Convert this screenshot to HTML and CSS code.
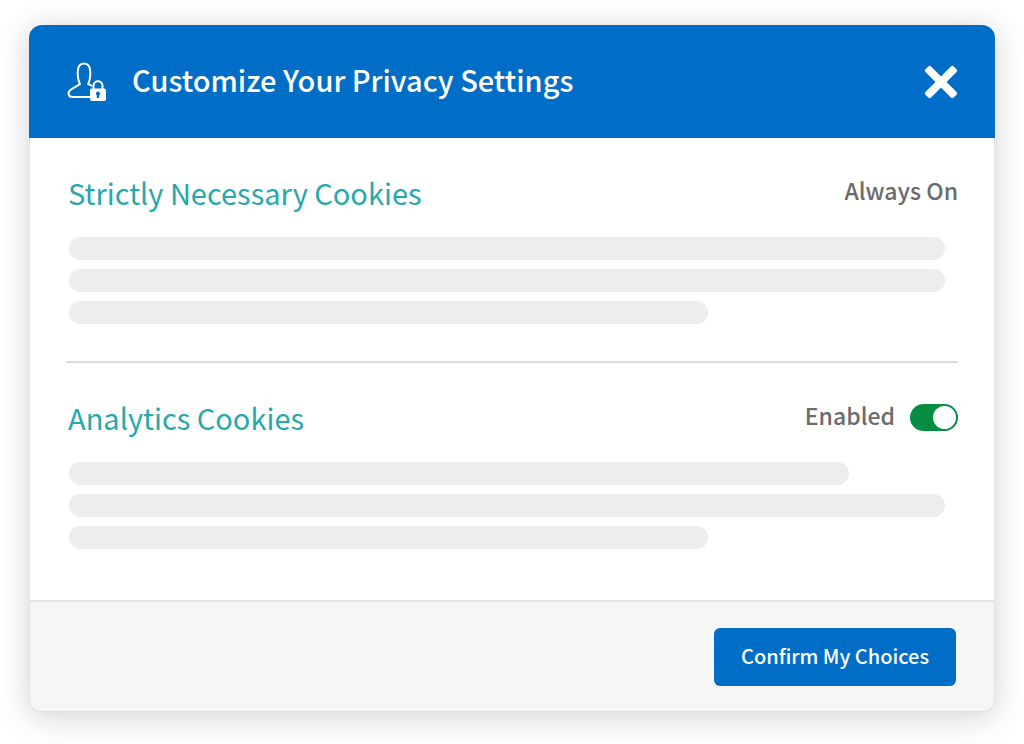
FILE: index.html
```html
<!DOCTYPE html>
<html lang="en">
<head>
    <meta charset="UTF-8">
    <meta name="viewport" content="width=device-width, initial-scale=1.0">
    <title>Privacy Settings</title>
    <link rel="stylesheet" href="styles.css">
</head>
<body>
    <main class="modal">
        <header class="modalHeader">
            <svg class="userIcon" viewBox="0 0 40 40" aria-hidden="true">
                <path d="M23 35H5.500C.8 35 .5 30 3.500 28C6 26.200 9.500 24.500 13 22C11.300 19 10.700 15 10.700 10.500C10.700 4.500 12.800 1.500 17 1.500C21.200 1.500 23.300 4.500 23.300 10.500C23.300 15 22.800 19 21.200 22C22.500 22.800 24 23.300 25.500 24" fill="none" stroke="#fff" stroke-width="2" stroke-linejoin="round"/>
                <path d="M26.500 27V24C26.500 17.800 35.500 17.800 35.500 24V27" fill="none" stroke="#fff" stroke-width="2"/>
                <rect x="23" y="26.500" width="16" height="12.500" rx="2" fill="#fff"/>
                <path d="M31 29.500a2.200 2.200 0 0 1 1.200 4V36h-2.400v-2.500A2.200 2.200 0 0 1 31 29.500z" fill="#006dc7"/>
            </svg>
            <h1 class="modalTitle">Customize Your Privacy Settings</h1>
            <button class="closeButton" type="button" aria-label="Close">
                <svg viewBox="0 0 34 34" aria-hidden="true">
                    <g fill="#fff">
                        <rect x="-3" y="13" width="40" height="8" rx="2" transform="rotate(45 17 17)"/>
                        <rect x="-3" y="13" width="40" height="8" rx="2" transform="rotate(-45 17 17)"/>
                    </g>
                </svg>
            </button>
        </header>

        <div class="modalBody">
            <section class="cookieGroup">
                <div class="groupTop">
                    <h2 class="groupTitle">Strictly Necessary Cookies</h2>
                    <p class="groupStatus">Always On</p>
                </div>
                <div class="textLines">
                    <span class="line"></span>
                    <span class="line"></span>
                    <span class="line short"></span>
                </div>
            </section>

            <section class="cookieGroup">
                <div class="groupTop">
                    <h2 class="groupTitle">Analytics Cookies</h2>
                    <label class="groupStatus" for="analytics">Enabled</label>
                    <input class="toggle" id="analytics" type="checkbox" role="switch" checked>
                </div>
                <div class="textLines">
                    <span class="line medium"></span>
                    <span class="line"></span>
                    <span class="line short"></span>
                </div>
            </section>
        </div>

        <footer class="modalFooter">
            <button class="confirmButton" type="button">Confirm My Choices</button>
        </footer>
    </main>
</body>
</html>
```
FILE: styles.css
```css
* {
    box-sizing: border-box;
}

body {
    margin: 0;
    padding: 25px 29px 31px;
    background-color: #fff;
    font-family: "Noto Sans CJK SC", "Noto Sans", sans-serif;
}

h1, h2, p {
    margin: 0;
}

.modal {
    border-radius: 13px;
    box-shadow: 0 4px 32px rgba(0, 0, 0, 0.18);
}

.modalHeader {
    display: flex;
    align-items: center;
    padding: 0 37px 0 38px;
    height: 113px;
    background-color: #006dc7;
    border-radius: 13px 13px 0 0;
}

.userIcon {
    width: 40px;
    height: 40px;
    flex: none;
}

.modalTitle {
    flex: 1;
    margin-left: 25px;
    padding-bottom: 6px;
    color: #fff;
    font-size: 29px;
    font-weight: 500;
    line-height: 40px;
}

.closeButton {
    width: 34px;
    height: 34px;
    padding: 0;
    border: 0;
    background: none;
    cursor: pointer;
}

.closeButton svg {
    display: block;
}

.modalBody {
    padding: 0 36px;
    background-color: #fff;
    border: solid #e4e4e4;
    border-width: 0 1px;
}

.cookieGroup {
    padding: 34px 0 37px;
}

.cookieGroup + .cookieGroup {
    border-top: 2px solid #dcdcdc;
    padding-bottom: 51px;
}

.groupTop {
    display: flex;
    align-items: center;
    margin-bottom: 25px;
}

.groupTitle {
    flex: 1;
    padding-left: 2px;
    color: #27a8ab;
    font-size: 29px;
    font-weight: 400;
    line-height: 40px;
}

.groupStatus {
    padding-bottom: 4px;
    color: #6b6b6b;
    font-size: 23px;
    font-weight: 500;
    line-height: 36px;
}

.toggle {
    appearance: none;
    display: flex;
    align-items: center;
    justify-content: flex-end;
    width: 48px;
    height: 27px;
    margin: 0 0 0 15px;
    padding: 0 2px;
    border-radius: 14px;
    background-color: #078d41;
    cursor: pointer;
}

.toggle:not(:checked) {
    justify-content: flex-start;
    background-color: #999;
}

.toggle::before {
    content: "";
    width: 23px;
    height: 23px;
    border-radius: 50%;
    background-color: #fff;
}

.textLines {
    display: flex;
    flex-direction: column;
    gap: 9px;
    padding: 0 13px 0 3px;
}

.line {
    height: 23px;
    border-radius: 12px;
    background-color: #ededed;
}

.line.medium {
    width: 89%;
}

.line.short {
    width: 73%;
}

.modalFooter {
    display: flex;
    justify-content: flex-end;
    padding: 26px 38px 25px;
    background-color: #f6f6f6;
    border: solid #e4e4e4;
    border-width: 2px 1px;
    border-radius: 0 0 13px 13px;
}

.confirmButton {
    padding: 11px 27px 13px;
    border: 0;
    border-radius: 6px;
    background-color: #006dc7;
    color: #fff;
    font-family: inherit;
    font-size: 20px;
    font-weight: 500;
    line-height: 34px;
    cursor: pointer;
}
```
